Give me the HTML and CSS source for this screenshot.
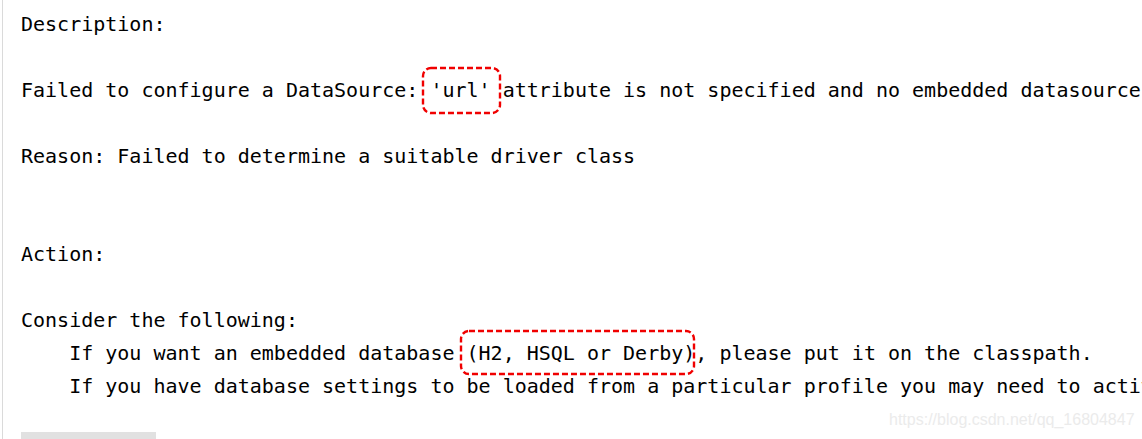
FILE: index.html
```html
<!DOCTYPE html>
<html>
<head>
<meta charset="utf-8">
<link rel="stylesheet" href="styles.css">
</head>
<body>
<div class="page">
<pre class="log">Description:

Failed to configure a DataSource: <span class="mark mark-url">'url'<svg class="dash" viewBox="0 0 79 47" preserveAspectRatio="none"><rect x="1" y="1" width="77" height="45" rx="8" ry="8"/></svg></span> attribute is not specified and no embedded datasource could be configured.

Reason: Failed to determine a suitable driver class


Action:

Consider the following:
    If you want an embedded database <span class="mark mark-db">(H2, HSQL or Derby)<svg class="dash" viewBox="0 0 235 45" preserveAspectRatio="none"><rect x="1" y="1" width="233" height="43" rx="8" ry="8"/></svg></span>, please put it on the classpath.
    If you have database settings to be loaded from a particular profile you may need to activate it (no profiles are currently active).</pre>
<div class="button-stub"></div>
</div>
<div class="watermark">https://blog.csdn.net/qq_16804847</div>
</body>
</html>
```

FILE: styles.css
```css
html, body {
  margin: 0;
  padding: 0;
  background: #ffffff;
  overflow: hidden;
  width: 1142px;
  height: 439px;
}

body {
  position: relative;
}

.page {
  margin-left: 2px;
  border-left: 1px solid #dadada;
  padding-left: 18px;
  padding-top: 8px;
  height: 439px;
  box-sizing: border-box;
}

.log {
  margin: 0;
  font-family: "DejaVu Sans Mono", "Liberation Mono", monospace;
  font-size: 20px;
  line-height: 32.9px;
  color: #000000;
  white-space: pre;
  overflow: hidden;
}

.mark {
  position: relative;
}

.dash {
  position: absolute;
  fill: none;
  stroke: #f00000;
  stroke-width: 2.4;
  stroke-dasharray: 6 3;
  overflow: visible;
}

.mark-url .dash {
  left: -8px;
  top: -11px;
  width: 79px;
  height: 47px;
}

.mark-db .dash {
  left: -7px;
  top: -11px;
  width: 235px;
  height: 45px;
}

.button-stub {
  margin-top: 29px;
  width: 135px;
  height: 20px;
  background: #e1e1e1;
}

.watermark {
  position: absolute;
  left: 889px;
  top: 410px;
  font-family: "Liberation Sans", Arial, sans-serif;
  font-size: 16px;
  line-height: 20px;
  color: #ebebeb;
  white-space: nowrap;
}
```
